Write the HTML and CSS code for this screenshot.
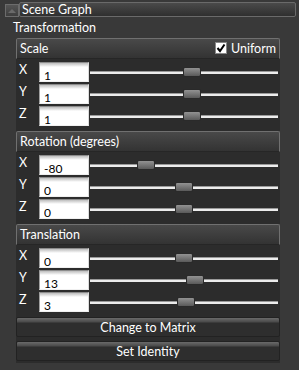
FILE: index.html
```html
<!DOCTYPE html>
<html lang="en">
    <head>
        <meta charset="UTF-8">
        <title>Scene Graph</title>
        <link rel="stylesheet" href="styles.css">
    </head>

    <body>

        <!-- 標題列 -->
        <div class="top-bar">
            <div class="collapse-btn">
                <svg width="8" height="5" viewBox="0 0 8 5"><path d="M0 5 L4 1 L8 5 Z" fill="#6a6a6a"/></svg>
            </div>
            <div class="title-bar">Scene Graph</div>
        </div>

        <div class="section-title">Transformation</div>

        <div class="panel">

            <!-- Scale -->
            <div class="group">
                <div class="group-header">
                    <span>Scale</span>
                    <label class="uniform"><span class="check">
                        <svg width="10" height="10" viewBox="0 0 10 10"><path d="M1.5 5 L4 8 L8.5 1.5" fill="none" stroke="#000" stroke-width="2"/></svg>
                    </span>Uniform</label>
                </div>
                <div class="rows">
                    <div class="row"><span class="axis">X</span><input class="field" type="text" value="1"><div class="track"><div class="thumb" style="left: 93px"></div></div></div>
                    <div class="row"><span class="axis">Y</span><input class="field" type="text" value="1"><div class="track"><div class="thumb" style="left: 93px"></div></div></div>
                    <div class="row"><span class="axis">Z</span><input class="field" type="text" value="1"><div class="track"><div class="thumb" style="left: 93px"></div></div></div>
                </div>
            </div>

            <!-- Rotation -->
            <div class="group">
                <div class="group-header"><span>Rotation (degrees)</span></div>
                <div class="rows">
                    <div class="row"><span class="axis">X</span><input class="field" type="text" value="-80"><div class="track"><div class="thumb" style="left: 47px"></div></div></div>
                    <div class="row"><span class="axis">Y</span><input class="field" type="text" value="0"><div class="track"><div class="thumb" style="left: 85px"></div></div></div>
                    <div class="row"><span class="axis">Z</span><input class="field" type="text" value="0"><div class="track"><div class="thumb" style="left: 85px"></div></div></div>
                </div>
            </div>

            <!-- Translation -->
            <div class="group">
                <div class="group-header"><span>Translation</span></div>
                <div class="rows">
                    <div class="row"><span class="axis">X</span><input class="field" type="text" value="0"><div class="track"><div class="thumb" style="left: 85px"></div></div></div>
                    <div class="row"><span class="axis">Y</span><input class="field" type="text" value="13"><div class="track"><div class="thumb" style="left: 96px"></div></div></div>
                    <div class="row"><span class="axis">Z</span><input class="field" type="text" value="3"><div class="track"><div class="thumb" style="left: 87px"></div></div></div>
                </div>
            </div>

            <div class="buttons">
                <button class="btn">Change to Matrix</button>
                <button class="btn">Set Identity</button>
            </div>

        </div>

    </body>
</html>
```

FILE: styles.css
```css
body {
    margin: 0;
    background: #393939;
    font-family: Lato, "Liberation Sans", sans-serif;
    font-size: 12.5px;
    color: #fff;
}
.top-bar {
    display: flex;
    align-items: flex-start;
    margin-top: 2px;
    padding-left: 5px;
}
.collapse-btn {
    width: 14px;
    height: 13px;
    margin-top: 2px;
    box-sizing: border-box;
    border: 1px solid #6c6c6c;
    background: linear-gradient(#555, #3e3e3e);
    display: flex;
    align-items: center;
    justify-content: center;
}
.title-bar {
    width: 277px;
    height: 15px;
    box-sizing: border-box;
    border: 1px solid #6a6a6a;
    border-radius: 2px;
    background: linear-gradient(#4a4a4a, #2f2f2f);
    padding-left: 2px;
    line-height: 13px;
}
.section-title {
    margin-top: 2px;
    height: 19px;
    line-height: 17px;
    padding-left: 13px;
}
.panel {
    margin-left: 16px;
    width: 264px;
    background: #2c2c2c;
    padding-bottom: 2px;
}
.group {
    margin-bottom: 5px;
}
.group-header {
    height: 21px;
    box-sizing: border-box;
    border: 1px solid #707070;
    border-bottom: 1px solid #262626;
    border-radius: 2px 2px 0 0;
    background: linear-gradient(#494949, #333);
    display: flex;
    align-items: center;
    justify-content: space-between;
    padding: 0 3px 1px 3px;
}
.uniform {
    display: flex;
    align-items: center;
    gap: 4px;
}
.check {
    width: 12px;
    height: 12px;
    box-sizing: border-box;
    border: 1px solid #888;
    background: #fff;
    display: flex;
    align-items: center;
    justify-content: center;
}
.rows {
    display: flex;
    flex-direction: column;
    gap: 2px;
    padding-top: 3px;
}
.row {
    display: flex;
    align-items: center;
    height: 20px;
}
.axis {
    width: 20px;
    padding-left: 3px;
    align-self: flex-start;
    line-height: 15px;
}
.field {
    width: 50px;
    height: 20px;
    box-sizing: border-box;
    margin: 0 1px 0 0;
    border: 1px solid;
    border-color: #8c8c8c #dcdcdc #f0f0f0 #a0a0a0;
    background: linear-gradient(#bdbdbd 0, #fff 4px);
    padding: 6px 0 0 4px;
    font-family: Lato, "Liberation Sans", sans-serif;
    font-size: 12px;
    color: #000;
    outline: none;
}
.track {
    position: relative;
    width: 188px;
    height: 3px;
    box-sizing: border-box;
    background: #ececec;
    border-top: 1px solid #9a9a9a;
}
.thumb {
    position: absolute;
    top: -5px;
    width: 18px;
    height: 10px;
    box-sizing: border-box;
    border: 1px solid #2a2a2a;
    border-radius: 2px;
    background: linear-gradient(#929292, #5a5a5a);
}
.buttons {
    display: flex;
    flex-direction: column;
    gap: 4px;
    margin-top: 2px;
}
.btn {
    height: 20px;
    border: 1px solid #222;
    border-radius: 2px;
    background: linear-gradient(#6a6a6a 0, #4a4a4a 4px, #2e2e2e 5px, #2e2e2e);
    color: #fff;
    font-family: Lato, "Liberation Sans", sans-serif;
    font-size: 12.5px;
    padding: 2px 0 0 0;
    line-height: 14px;
}
```
